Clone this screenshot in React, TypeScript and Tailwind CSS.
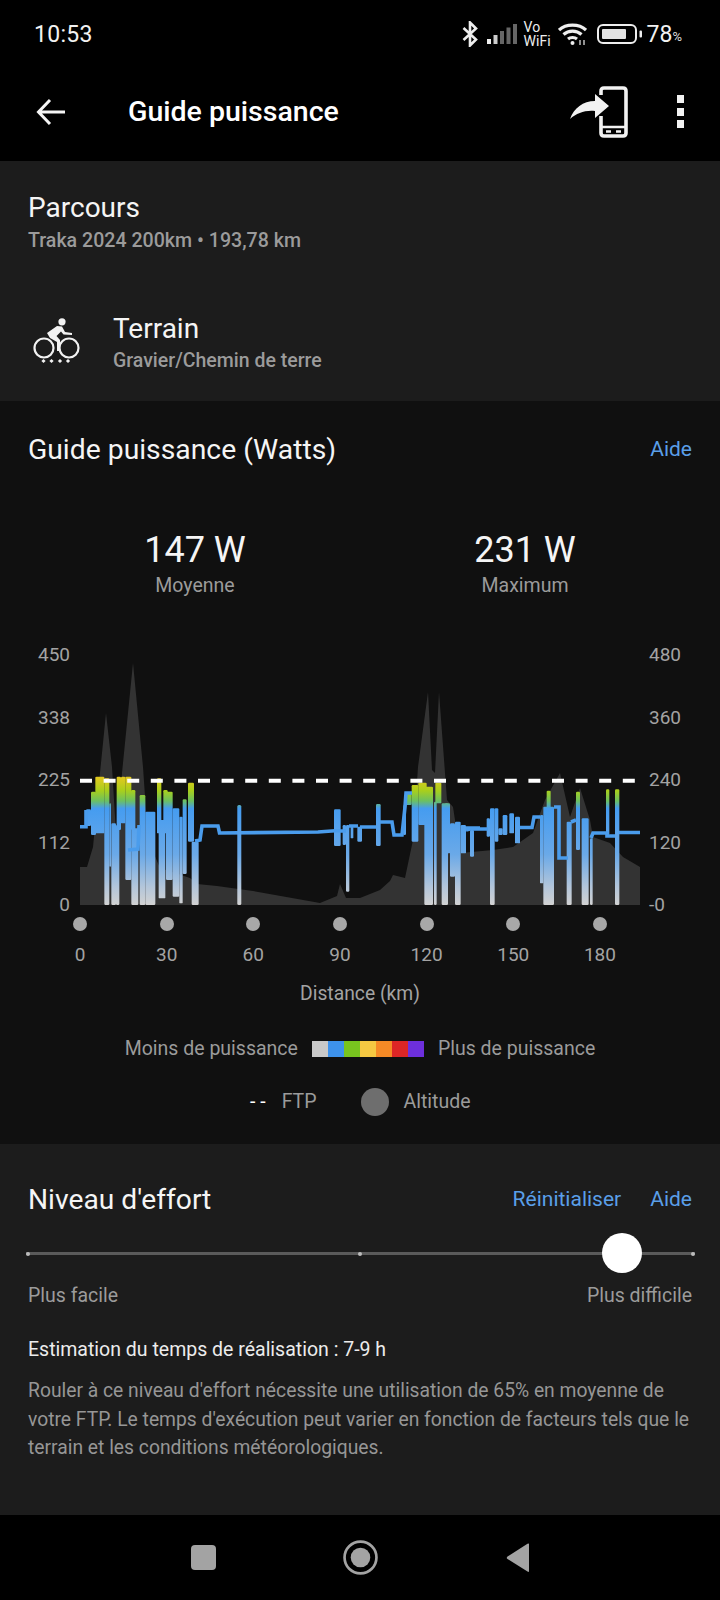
import React from 'react';

type Bar = [number, number, number, number];

// bars are traced from three crops of the chart: x0, x1, top, bottom, at 3x of the crop origin
const leftBars: Bar[] = [
    [30, 45, 118, 168], [45, 60, 65, 195], [58, 85, 20, 190], [85, 100, 25, 405], [100, 105, 100, 290],
    [106, 120, 160, 405], [120, 130, 165, 405], [122, 135, 20, 180], [135, 148, 20, 160], [148, 166, 20, 330],
    [166, 187, 175, 405], [165, 178, 60, 180], [191, 208, 75, 405], [208, 238, 125, 405], [243, 256, 25, 190],
    [248, 268, 150, 385], [262, 275, 60, 190], [270, 290, 65, 330], [290, 310, 115, 380], [310, 320, 140, 400],
    [320, 332, 88, 312], [336, 354, 38, 215], [347, 368, 215, 405],
];
const midBars: Bar[] = [
    [12, 32, 118, 228], [38, 48, 165, 225], [48, 58, 165, 365], [62, 70, 170, 205], [82, 96, 170, 215],
    [138, 152, 102, 228], [220, 228, 105, 195], [228, 245, 68, 105], [245, 265, 45, 215], [265, 290, 38, 165],
    [283, 309, 50, 405], [312, 320, 95, 405], [316, 334, 38, 100], [335, 354, 100, 405], [345, 360, 100, 250],
    [360, 375, 160, 320], [375, 392, 155, 405], [392, 408, 165, 250], [420, 432, 180, 260], [470, 480, 145, 200],
];
const rightBars: Bar[] = [
    [0, 14, 115, 405], [14, 25, 115, 215], [25, 38, 175, 195], [38, 52, 135, 195], [58, 72, 130, 190],
    [75, 90, 140, 220], [150, 160, 135, 340], [160, 192, 110, 405], [170, 182, 62, 112], [230, 245, 155, 405],
    [258, 270, 65, 240], [275, 296, 145, 405], [300, 308, 205, 405], [348, 358, 58, 195], [375, 388, 58, 405],
];

const altitude = '80,905 80,867 87,867 93,847 100,773 106,713 112,767 117,850 122,773 133,663 143,767 148,840 160,868 175,873 190,878 197,884 217,886 253,891 320,903 337,896 340,884 346,898 360,898 380,890 390,881 393,875 405,878 413,840 418,767 428,692 432,770 435,773 439,692 447,800 453,807 460,853 493,850 513,847 533,833 545,800 560,773 570,817 580,788 590,820 593,837 610,843 623,857 640,867 640,905';

const lines = [
    'M80 826.7 H86 V810',
    'M128 850 L138 849 L139 825',
    'M195 841 L200 840 L202 826 H218 L219.5 833 L318 832 L335 830.7 H340',
    'M340 831 H346 M349 826 H358 M360 827 H376 M380 822 L384 822 L386 822 H392 L394 835 H402 L405 807 L406 793 H412',
    'M466 830 L470 829 M466 828 H480 M466 829 H488',
    'M520 827.5 H532 L534 817 H540',
    'M554 807 H559 V858 H568 M571 822 L576 820',
    'M591 838 L593 833 H607 V836 H615 M619 832.5 H640',
];

const xTicks = ['0', '30', '60', '90', '120', '150', '180'];
const legendColors = ['bg-[#c9c9c9]', 'bg-[#3d92ec]', 'bg-[#78c41f]', 'bg-[#f5c842]', 'bg-[#f58a26]', 'bg-[#dc2626]', 'bg-[#6d2fdc]'];

const BarGroup = ({ bars, ox }: { bars: Bar[]; ox: number }) => (
    <>
        {bars.map(([a, b, t, d], i) => (
            <rect key={i} x={ox + a / 3} y={770 + t / 3} width={(b - a) / 3} height={(d - t) / 3} rx={1.2} fill="url(#power)" />
        ))}
    </>
);

const PowerChart = () => (
    <svg className="ml-[10px] block h-[270px] w-[560px]" viewBox="80 645 560 270">
        <defs>
            <linearGradient id="power" gradientUnits="userSpaceOnUse" x1="0" y1="778" x2="0" y2="905">
                <stop offset="0" stopColor="#e0c81e" />
                <stop offset="0.1" stopColor="#a8cf1c" />
                <stop offset="0.18" stopColor="#6cc060" />
                <stop offset="0.24" stopColor="#459cf0" />
                <stop offset="0.6" stopColor="#6aa9e8" />
                <stop offset="0.86" stopColor="#b4c6da" />
                <stop offset="1" stopColor="#d2d2d2" />
            </linearGradient>
        </defs>
        <polygon points={altitude} fill="#333333" />
        <BarGroup bars={leftBars} ox={76} />
        <BarGroup bars={midBars} ox={330} />
        <BarGroup bars={rightBars} ox={490} />
        {lines.map((d, i) => (
            <path key={i} d={d} fill="none" stroke="#4a9cec" strokeWidth={3.6} />
        ))}
        <rect x={237.3} y={805} width={4} height={100} rx={1.5} fill="url(#power)" />
        <line x1="80" y1="780.7" x2="640" y2="780.7" stroke="#fff" strokeWidth={4} strokeDasharray="12 11.6" />
    </svg>
);

const AxisColumn = ({ values, className }: { values: string[]; className: string }) => (
    <div className={`flex h-[270px] flex-col justify-between text-[19px] leading-5 text-[#a3a3a3] ${className}`}>
        {values.map((v) => (
            <span key={v}>{v}</span>
        ))}
    </div>
);

const StatusBar = () => (
    <div className="flex h-[68px] items-center justify-between pl-[34px] pr-[38px] text-white">
        <span className="text-[23px] leading-none tracking-[0.3px] text-[#f2f2f2]">10:53</span>
        <div className="flex items-center">
            <svg className="h-[26px] w-[16px]" viewBox="0 0 16 26" fill="none" stroke="#eee" strokeWidth={2.6}>
                <path d="M1.5 7 L14 18.5 L8 24.5 V1.5 L14 7.5 L1.5 19" />
            </svg>
            <svg className="ml-[9px] h-[20px] w-[31px]" viewBox="0 0 31 20">
                <rect x="0" y="15" width="4" height="5" fill="#eee" />
                <rect x="6.5" y="11" width="4" height="9" fill="#ccc" />
                <rect x="13" y="7" width="4" height="13" fill="#666" />
                <rect x="19.5" y="3.5" width="4" height="16.5" fill="#666" />
                <rect x="26" y="0" width="4" height="20" fill="#666" />
            </svg>
            <div className="ml-[6px] flex w-[28px] flex-col text-[14px] leading-[14px] text-[#eee]">
                <span>Vo</span>
                <span>WiFi</span>
            </div>
            <svg className="ml-[6px] h-[23px] w-[29px]" viewBox="0 0 29 23" fill="none" stroke="#eee" strokeWidth={3.2}>
                <path d="M1 7 C8 0.5 21 0.5 28 7" />
                <path d="M5.5 11.5 C10.5 7 18.5 7 23.5 11.5" />
                <path d="M10 16 C12.5 14 16.5 14 19 16" />
                <circle cx="14.5" cy="20" r="2" fill="#eee" stroke="none" />
                <path d="M22 22 V17 M26 22 V17" strokeWidth={1.2} />
            </svg>
            <svg className="ml-[10px] h-[20px] w-[46px]" viewBox="0 0 46 20">
                <rect x="1" y="1" width="38" height="18" rx="5" fill="none" stroke="#eee" strokeWidth={2} />
                <rect x="5" y="5" width="24" height="10" rx="1" fill="#e3e3e3" />
                <rect x="42.5" y="6.5" width="2.5" height="7" rx="1" fill="#eee" />
            </svg>
            <span className="ml-[4px] text-[23px] leading-none text-[#f2f2f2]">78</span>
            <span className="mt-[5px] text-[13px] leading-none text-[#ddd]">%</span>
        </div>
    </div>
);

const Header = () => (
    <header className="flex h-[93px] items-start pl-[36px] pr-[36px] text-white">
        <svg className="mt-[30px] h-[28px] w-[29px]" viewBox="0 0 29 28" fill="none" stroke="#f4f4f4" strokeWidth={3}>
            <path d="M29 14 H3 M14 2 L2.5 14 L14 26" />
        </svg>
        <h1 className="ml-[63px] mt-[25px] text-[28.5px] font-medium leading-[38px]">Guide puissance</h1>
        <svg className="ml-auto mt-[18px] h-[52px] w-[60px]" viewBox="0 0 60 52">
            <path fill="none" stroke="#f2f2f2" strokeWidth={3.6} d="M33 9 V5 Q33 2 36 2 H55 Q58 2 58 5 V47 Q58 50 55 50 H36 Q33 50 33 47 V30" />
            <path fill="none" stroke="#f2f2f2" strokeWidth={2.4} d="M33 41 H58 M38 45.5 H43 M48 45.5 H53" />
            <path fill="#f2f2f2" d="M27 8 L41 20 L27 32 V25 C17 24 9 27 2 33 C6 22 15 15 27 15 Z" />
        </svg>
        <div className="ml-[49px] mt-[27px] flex flex-col gap-[4.5px]">
            <span className="block h-[8px] w-[7px] bg-[#f2f2f2]" />
            <span className="block h-[8px] w-[7px] bg-[#f2f2f2]" />
            <span className="block h-[8px] w-[7px] bg-[#f2f2f2]" />
        </div>
    </header>
);

const BikeIcon = () => (
    <svg className="ml-[2px] h-[50px] w-[52px]" viewBox="0 0 52 50" fill="none">
        <circle cx="32" cy="3.8" r="3.6" fill="#f2f2f2" />
        <path fill="#f2f2f2" d="M17 15 L27 8 L32 8.5 L35 14 L42 15 V17 L33.5 16.5 L31 13.5 L26.5 18 L30 22 V33 H27 V24 L20 20 Z" />
        <circle cx="14" cy="30" r="9.5" stroke="#f2f2f2" strokeWidth={2.2} />
        <circle cx="39" cy="30" r="9.5" stroke="#f2f2f2" strokeWidth={2.2} />
        {[13.5, 21.5, 30, 38].map((x) => (
            <rect key={x} x={x - 1.5} y={41.5} width={3} height={3} fill="#f2f2f2" transform={`rotate(45 ${x} 43)`} />
        ))}
    </svg>
);

const App: React.FC = () => {
    return (
        <div className="h-[1600px] w-[720px] overflow-hidden bg-black font-['Roboto',sans-serif]">
            <StatusBar />
            <Header />

            <section className="h-[240px] bg-[#1c1c1c] pl-[28px] pt-[27px]">
                <h2 className="text-[28px] leading-[40px] text-[#f5f5f5]">Parcours</h2>
                <p className="text-[19.6px] font-medium leading-[26px] text-[#9b9b9b]">Traka 2024 200km • 193,78 km</p>
                <div className="mt-[57px] flex items-center">
                    <BikeIcon />
                    <div className="ml-[31px]">
                        <h3 className="text-[28px] leading-[36px] text-[#f5f5f5]">Terrain</h3>
                        <p className="text-[19.5px] font-medium leading-[28px] text-[#9b9b9b]">Gravier/Chemin de terre</p>
                    </div>
                </div>
            </section>

            <section className="h-[743px] bg-[#101010] pt-[29px]">
                <div className="flex h-[40px] items-center justify-between pl-[28px] pr-[28px]">
                    <h2 className="text-[28.3px] text-[#f5f5f5]">Guide puissance (Watts)</h2>
                    <a className="text-[21px] text-[#5a9fe8]">Aide</a>
                </div>

                <div className="mt-[58px] grid grid-cols-2 px-[30px] text-center">
                    <div>
                        <div className="text-[36px] leading-[44px] text-[#f5f5f5]">147 W</div>
                        <div className="mt-[2px] text-[19.5px] leading-6 text-[#9b9b9b]">Moyenne</div>
                    </div>
                    <div>
                        <div className="text-[36px] leading-[44px] text-[#f5f5f5]">231 W</div>
                        <div className="mt-[2px] text-[19.5px] leading-6 text-[#9b9b9b]">Maximum</div>
                    </div>
                </div>

                <div className="mt-[47px] flex">
                    <AxisColumn values={['450', '338', '225', '112', '0']} className="w-[70px] items-end" />
                    <PowerChart />
                    <AxisColumn values={['480', '360', '240', '120', '-0']} className="ml-[9px] items-start" />
                </div>

                <div className="ml-[36.67px] flex">
                    {xTicks.map((t) => (
                        <div key={t} className="flex w-[86.67px] flex-col items-center">
                            <span className="mt-[2px] block h-[14px] w-[14px] rounded-full bg-[#a8a8a8]" />
                            <span className="mt-[14px] text-[19px] leading-5 text-[#a3a3a3]">{t}</span>
                        </div>
                    ))}
                </div>

                <div className="mt-[19px] text-center text-[19.3px] leading-5 text-[#a3a3a3]">Distance (km)</div>

                <div className="mt-[35px] flex h-5 items-center justify-center text-[19.5px] leading-5 text-[#9b9b9b]">
                    <span>Moins de puissance</span>
                    <div className="ml-[14px] flex h-[16px]">
                        {legendColors.map((c) => (
                            <span key={c} className={`block h-full w-[16px] ${c}`} />
                        ))}
                    </div>
                    <span className="ml-[14px]">Plus de puissance</span>
                </div>

                <div className="mt-[29px] flex h-[28px] items-center pl-[250px] text-[19.5px] text-[#9b9b9b]">
                    <span className="text-white">- -</span>
                    <span className="ml-[16px]">FTP</span>
                    <span className="ml-[44px] block h-[28px] w-[28px] rounded-full bg-[#6e6e6e]" />
                    <span className="ml-[15px]">Altitude</span>
                </div>
            </section>

            <section className="h-[371px] bg-[#1c1c1c] pl-[28px] pr-[28px] pt-[36px]">
                <div className="flex h-[40px] items-center justify-between">
                    <h2 className="text-[28.2px] text-[#f5f5f5]">Niveau d'effort</h2>
                    <div className="flex gap-[29px] text-[21px] text-[#5a9fe8]">
                        <a>Réinitialiser</a>
                        <a>Aide</a>
                    </div>
                </div>

                <div className="relative ml-[-2px] mr-[-3px] mt-[32px] h-[3px] bg-[#5a5a5a]">
                    <span className="absolute left-0 top-[-0.5px] h-[4px] w-[4px] rounded-full bg-[#bbb]" />
                    <span className="absolute left-[332px] top-[-0.5px] h-[4px] w-[4px] rounded-full bg-[#bbb]" />
                    <span className="absolute right-0 top-[-0.5px] h-[4px] w-[4px] rounded-full bg-[#bbb]" />
                    <span className="absolute left-[576px] top-[-19px] h-[40px] w-[40px] rounded-full bg-white" />
                </div>

                <div className="mt-[29px] flex justify-between text-[19.5px] leading-6 text-[#9b9b9b]">
                    <span>Plus facile</span>
                    <span>Plus difficile</span>
                </div>

                <p className="mt-[30px] text-[19.5px] leading-6 text-[#ececec]">Estimation du temps de réalisation : 7-9 h</p>
                <p className="mt-[15px] text-[19.3px] leading-[28.5px] text-[#969696]">
                    Rouler à ce niveau d'effort nécessite une utilisation de 65% en moyenne de votre FTP. Le temps d'exécution peut varier en fonction de facteurs tels que le terrain et les conditions météorologiques.
                </p>
            </section>

            <nav className="flex h-[85px] items-center justify-center">
                <span className="block h-[25px] w-[25px] rounded-[4px] bg-[#a3a3a3]" />
                <svg className="ml-[127px] h-[35px] w-[35px]" viewBox="0 0 34 34">
                    <circle cx="17" cy="17" r="15.5" fill="none" stroke="#a3a3a3" strokeWidth={2.6} />
                    <circle cx="17" cy="17" r="9.5" fill="#a3a3a3" />
                </svg>
                <svg className="ml-[128px] h-[30px] w-[24px]" viewBox="0 0 24 30">
                    <path d="M23 1 V28 Q23 29.5 21.5 28.5 L1.5 16 Q0 15 1.5 13.5 L21.5 0.8 Q23 0 23 1 Z" fill="#a3a3a3" />
                </svg>
            </nav>
        </div>
    );
};

export default App;
